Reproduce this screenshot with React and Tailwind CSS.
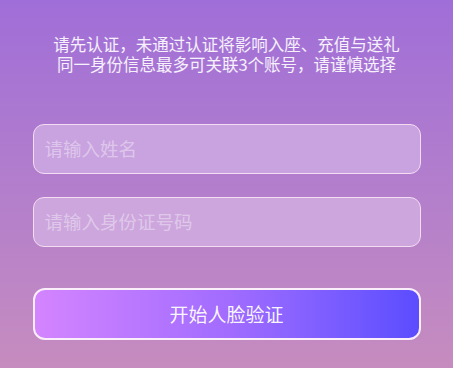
export default function App() {
  const font = { fontFamily: '"Noto Sans CJK SC", "Noto Sans", sans-serif' };
  return (
    <div
      className="w-[453px] h-[368px] overflow-hidden bg-gradient-to-b from-[#a06ed8] to-[#c68cbf] flex flex-col items-center"
      style={font}
    >
      <div className="mt-[34px] text-center text-white/90 text-[16.5px] leading-[20px]">
        <div>请先认证，未通过认证将影响入座、充值与送礼</div>
        <div>同一身份信息最多可关联3个账号，请谨慎选择</div>
      </div>
      <div className="mt-[50px] w-[388px] flex flex-col gap-[23px]">
        <div className="h-[50px] rounded-[11px] border-[1.5px] border-[#f4dcf2] bg-[#c9a3e0] flex items-center px-[11px]">
          <span className="text-[18.5px] text-white/40">请输入姓名</span>
        </div>
        <div className="h-[50px] rounded-[11px] border-[1.5px] border-[#f4dcf2] bg-[#cca6dd] flex items-center px-[11px]">
          <span className="text-[18.5px] text-white/40">请输入身份证号码</span>
        </div>
      </div>
      <div className="mt-[41px] w-[388px] h-[52px] rounded-[12px] border-[2.5px] border-[#fbeefb] bg-gradient-to-r from-[#d484ff] via-[#a26cff] to-[#5b4cff] flex items-center justify-center">
        <span className="text-[19px] text-white/95">开始人脸验证</span>
      </div>
    </div>
  );
}
